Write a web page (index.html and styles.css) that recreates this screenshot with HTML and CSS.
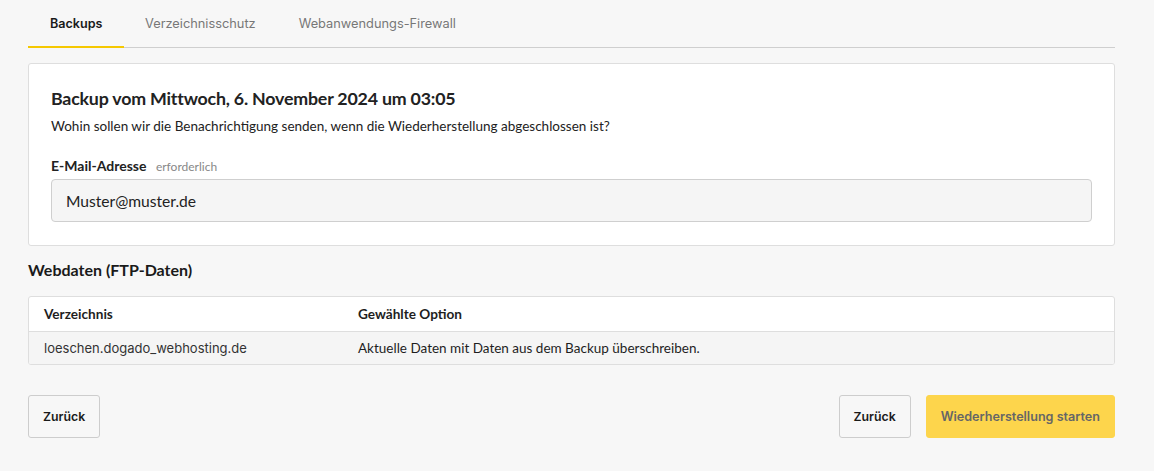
FILE: index.html
```html
<!DOCTYPE html>
<html lang="de">
  <head>
    <meta charset="UTF-8" />
    <meta name="viewport" content="width=device-width, initial-scale=1.0" />
    <title>Backup wiederherstellen</title>
    <link rel="stylesheet" href="styles.css">
  </head>
  <body>
    <div class="page">
      <nav class="tabs">
        <a class="tab active">Backups</a>
        <a class="tab">Verzeichnisschutz</a>
        <a class="tab">Webanwendungs-Firewall</a>
      </nav>

      <div class="card">
        <h2>Backup vom Mittwoch, 6. November 2024 um 03:05</h2>
        <p class="intro">Wohin sollen wir die Benachrichtigung senden, wenn die Wiederherstellung abgeschlossen ist?</p>
        <label class="field-label" for="email">E-Mail-Adresse <span class="hint">erforderlich</span></label>
        <input class="field" id="email" type="text" value="Muster@muster.de" />
      </div>

      <h3 class="section-title">Webdaten (FTP-Daten)</h3>

      <div class="table">
        <div class="row head">
          <div class="cell">Verzeichnis</div>
          <div class="cell">Gewählte Option</div>
        </div>
        <div class="row body">
          <div class="cell mono">loeschen.dogado_webhosting.de</div>
          <div class="cell">Aktuelle Daten mit Daten aus dem Backup überschreiben.</div>
        </div>
      </div>

      <div class="actions">
        <button class="btn">Zurück</button>
        <div class="actions-right">
          <button class="btn">Zurück</button>
          <button class="btn primary">Wiederherstellung starten</button>
        </div>
      </div>
    </div>
  </body>
</html>
```

FILE: styles.css
```css
body {
  margin: 0;
  background: #f7f7f7;
  font-family: "Inter", "Liberation Sans", sans-serif;
  color: #1e1e1e;
}
.page {
  width: 1087px;
  padding: 0 0 0 28px;
}
.tabs {
  display: flex;
  height: 47px;
  border-bottom: 1px solid #cfcfcf;
}
.tab {
  padding: 0 21.5px;
  line-height: 48px;
  font-size: 12.8px;
  color: #777;
}
.tab.active {
  color: #1a1a1a;
  font-weight: 600;
  box-shadow: inset 0 -2px 0 #f5c800;
  margin-bottom: -1px;
  padding: 0 21px 0 22px;
  font-size: 12.6px;
}
.card {
  margin-top: 15px;
  background: #fff;
  border: 1px solid #dedede;
  border-radius: 3px;
  padding: 23px 22px 23px;
}
.card h2 {
  margin: 0;
  font-family: "Lato", sans-serif;
  font-size: 17.8px;
  font-weight: 700;
  letter-spacing: -0.2px;
  color: #222;
}
.intro {
  margin: 9px 0 0;
  font-family: "Lato", sans-serif;
  font-size: 13.5px;
  color: #222;
}
.field-label {
  display: block;
  margin-top: 23px;
  font-family: "Lato", sans-serif;
  font-size: 14px;
  font-weight: 700;
  color: #222;
}
.hint {
  margin-left: 6px;
  font-size: 12px;
  font-weight: 400;
  color: #888;
}
.field {
  display: block;
  box-sizing: border-box;
  width: 100%;
  height: 43px;
  margin-top: 5px;
  padding: 0 14px;
  background: #f5f5f5;
  border: 1px solid #cfcfcf;
  border-radius: 4px;
  font-family: "Lato", sans-serif;
  font-size: 15.6px;
  color: #222;
}
.section-title {
  margin: 14px 0 0;
  font-family: "Lato", sans-serif;
  font-size: 16px;
  font-weight: 700;
  color: #1a1a1a;
}
.table {
  margin-top: 17px;
  background: #fff;
  border: 1px solid #dedede;
  border-radius: 3px;
  overflow: hidden;
}
.row {
  display: grid;
  grid-template-columns: 314px 1fr;
  padding: 0 15px;
  align-items: center;
}
.row.head {
  height: 34px;
  border-bottom: 1px solid #dedede;
  font-family: "Lato", sans-serif;
  font-size: 13.6px;
  font-weight: 700;
}
.row.body {
  height: 32px;
  background: #f5f5f5;
  font-family: "Lato", sans-serif;
  font-size: 13.5px;
}
.cell.mono {
  font-family: "Inter", sans-serif;
  font-size: 13px;
  color: #333;
}
.actions {
  display: flex;
  justify-content: space-between;
  margin-top: 30px;
}
.actions-right {
  display: flex;
  gap: 15px;
}
.btn {
  height: 43px;
  padding: 0 14px;
  background: #f7f7f7;
  border: 1px solid #cdcdcd;
  border-radius: 3px;
  font-family: "Inter", sans-serif;
  font-size: 12.3px;
  font-weight: 600;
  color: #1a1a1a;
}
.btn.primary {
  background: #fdd54c;
  border-color: #fdd54c;
  padding: 0 14px;
  color: #666;
  font-size: 12.6px;
}
```
